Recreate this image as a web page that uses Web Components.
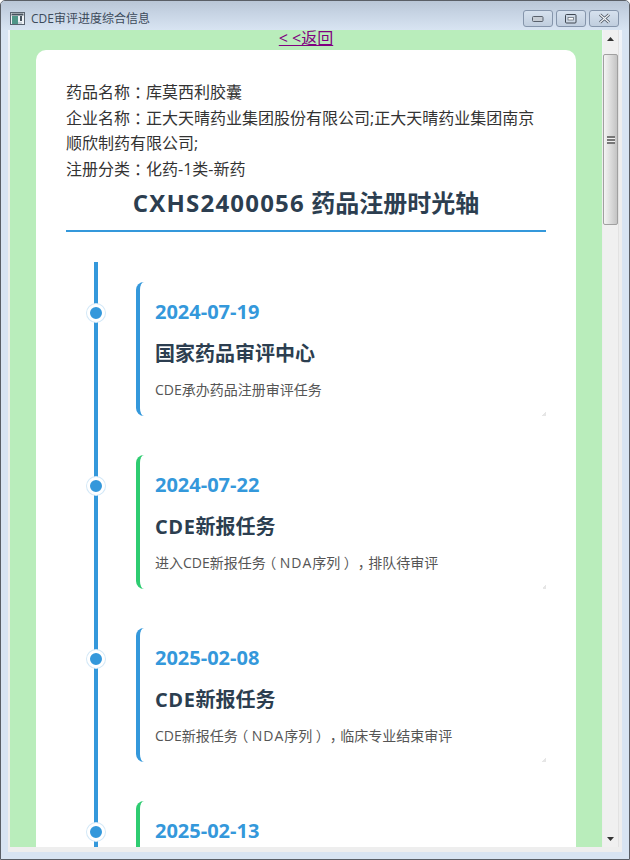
<!DOCTYPE html>
<html lang="zh"><head><meta charset="utf-8"><title>CDE审评进度综合信息</title>
<style>
html,body{margin:0;padding:0;width:630px;height:860px;overflow:hidden}
body{font-family:"Open Sans","Noto Sans CJK SC",sans-serif;text-spacing-trim:space-all}
</style></head><body>
<win-frame caption="CDE审评进度综合信息">
  <a-back slot="top"></a-back>
  <drug-card>
    <info-lines>
      <zh-text text="药品名称：库莫西利胶囊"></zh-text>
      <zh-text text="企业名称：正大天晴药业集团股份有限公司;正大天晴药业集团南京顺欣制药有限公司;"></zh-text>
      <zh-text text="注册分类：化药-1类-新药"></zh-text>
    </info-lines>
    <time-head></time-head>
    <time-line>
      <time-item accent="#3498db" date="2024-07-19" title="国家药品审评中心" desc="CDE承办药品注册审评任务"></time-item>
      <time-item accent="#2ecc71" date="2024-07-22" title="CDE新报任务" desc="进入CDE新报任务（NDA序列），排队待审评"></time-item>
      <time-item accent="#3498db" date="2025-02-08" title="CDE新报任务" desc="CDE新报任务（NDA序列），临床专业结束审评"></time-item>
      <time-item accent="#2ecc71" date="2025-02-13"></time-item>
    </time-line>
  </drug-card>
</win-frame>
<script>
const esc=s=>s.replace(/&/g,'&amp;').replace(/</g,'&lt;');
function rich(text,ls){
  return esc(text).replace(/[：，（）]|[A-Za-z0-9]+/g,m=>{
    if('：，（）'.includes(m))return `<span class="p">${m}</span>`;
    if(m==='NDA')return `<span style="letter-spacing:1px">${m}</span>`;
    return ls?`<span style="letter-spacing:${ls}">${m}</span>`:m;
  });
}
const RICH=`.p{display:inline-block;padding:0 .25em;font-feature-settings:"halt"}`;
function def(name,fn){
  customElements.define(name,class extends HTMLElement{
    constructor(){super();this.attachShadow({mode:'open'})}
    connectedCallback(){this.shadowRoot.innerHTML=fn(n=>this.getAttribute(n)||'')}
  });
}
def('zh-text',a=>`<style>:host{display:block}${RICH}</style>${rich(a('text'),a('ls'))}`);
def('win-frame',a=>`<style>
:host{display:flex;flex-direction:column;box-sizing:border-box;width:630px;height:860px;background:#d8e4f2;border:1px solid #5a5f66;border-radius:5px 5px 0 0;overflow:hidden}
.title{flex:none;box-sizing:border-box;height:29px;padding:6px 10px 0 9px;display:flex;align-items:center;gap:6px;background:linear-gradient(#b9c6d6,#c6d3e3 40%,#d8e4f2);font:12px "Open Sans","Noto Sans CJK SC",sans-serif;color:#3c4a5a}
.cap{flex:1;white-space:nowrap;margin-top:-1px}
.btns{display:flex;gap:3px}
.btn{box-sizing:border-box;width:30px;height:17px;border:1px solid #8595ab;border-radius:3px;background:linear-gradient(#d6e1ee,#c0cede);display:flex;align-items:center;justify-content:center}
.inner{flex:none;margin:0 7px 7px 7px;height:822px;box-sizing:border-box;padding:0 3px 5px 2px;display:flex;gap:1px;background:linear-gradient(#f0f4fa,#eee 8%)}
.view{width:592px;height:817px;background:#b9edbb;overflow:hidden;display:flex;flex-direction:column;align-items:center}
.bar{width:16px;height:817px;background:#f0f0f0;box-sizing:border-box;display:flex;flex-direction:column;align-items:center;border-right:1px solid #e2e2e2}
.arrow{flex:none;height:18px;display:flex;align-items:center;justify-content:center}
.arrow.b{height:16px}
.thumb{flex:none;margin-top:6px;width:15px;height:171px;box-sizing:border-box;border:1px solid #a0a0a0;border-radius:2px;background:linear-gradient(90deg,#f4f4f4,#dcdcdc 50%,#c4c4c4);display:flex;align-items:center;justify-content:center}
.grip{width:8px;height:8px;background:repeating-linear-gradient(#777 0 2px,#f0f0f0 2px 3px)}
.sp{flex:1}
</style>
<div class="title">
  <svg width="15" height="14" viewBox="0 0 15 14"><rect x=".5" y=".5" width="14" height="12" fill="#eef2f6" stroke="#5a6470"/><rect x="1.5" y="1.5" width="12" height="2" fill="#46525e"/><rect x="2" y="4" width="6" height="8" fill="#4f9688"/><rect x="10" y="4" width="2" height="5" fill="#46525e"/><rect x="8" y="10" width="4" height="2" fill="#c9d2da"/></svg>
  <span class="cap">${esc(a('caption'))}</span>
  <div class="btns">
    <div class="btn"><svg width="12" height="7" viewBox="0 0 12 7" style="margin-top:2px"><rect x=".5" y=".5" width="10.5" height="5" rx="1" fill="#c5ccd4" stroke="#59616c"/></svg></div>
    <div class="btn"><svg width="12" height="10" viewBox="0 0 12 10"><rect x=".5" y=".5" width="10.5" height="8.5" rx="1" fill="#ccd7e4" stroke="#3f4751"/><rect x="3" y="3.5" width="5.5" height="2.5" fill="#fff" stroke="#59616c" stroke-width=".7"/></svg></div>
    <div class="btn"><svg width="13" height="11" viewBox="0 0 13 11"><path d="M2 1.5l9 8M11 1.5l-9 8" stroke="#4d5662" stroke-width="3" fill="none"/><path d="M2 1.5l9 8M11 1.5l-9 8" stroke="#f2f5f8" stroke-width="1.2" fill="none"/></svg></div>
  </div>
</div>
<div class="inner">
  <div class="view"><slot name="top"></slot><slot></slot></div>
  <div class="bar">
    <div class="arrow"><svg width="7" height="4" viewBox="0 0 7 4"><path d="M3.5 0L7 4H0z" fill="#333"/></svg></div>
    <div class="thumb"><div class="grip"></div></div>
    <div class="sp"></div>
    <div class="arrow b"><svg width="7" height="4" viewBox="0 0 7 4"><path d="M0 0h7L3.5 4z" fill="#333"/></svg></div>
  </div>
</div>`);
def('a-back',()=>`<style>
:host{display:block;flex:none;height:20px;width:100%;text-align:center;font:16px/16px "Open Sans","Noto Sans CJK SC",sans-serif}
a{color:#800080;text-decoration:underline}
</style><a href="#b">&lt; &lt;返回</a>`);
def('drug-card',()=>`<style>
:host{display:block;flex:none;box-sizing:border-box;width:540px;padding:30px;background:#fff;border-radius:10px;color:#333}
</style><slot></slot>`);
def('info-lines',()=>`<style>
:host{display:block;font-size:16px;line-height:25.6px;color:#333}
</style><slot></slot>`);
def('time-head',()=>`<style>
:host{display:block;box-sizing:border-box;height:50px;text-align:center;font-size:24px;line-height:41px;font-weight:700;color:#2c3e50;border-bottom:2px solid #3498db}
span{letter-spacing:1.2px}
</style><span>CXHS2400056</span> 药品注册时光轴`);
def('time-line',()=>`<style>
:host{display:flex;flex-direction:column;gap:39px;position:relative;margin-top:30px;padding:20px 0 0 70px}
.rail{position:absolute;left:28px;top:0;bottom:0;width:4px;background:#3498db}
</style><div class="rail"></div><slot></slot>`);
def('time-item',a=>`<style>
:host{display:block;position:relative;box-sizing:border-box;height:134px;padding:15px;background:#fff;border-left:4px solid ${a('accent')};border-radius:8px}
.dot{position:absolute;left:-53px;top:22px;width:12px;height:12px;border-radius:50%;background:#3498db;border:3px solid #fff;box-shadow:0 0 0 1px #d3e8f7}
.date{font-size:20px;line-height:30px;font-weight:700;color:#3498db}
.t{font-size:20px;line-height:30px;font-weight:700;color:#2c3e50;margin-top:12px}
.d{font-size:14px;line-height:22px;color:#555;margin-top:10px;white-space:nowrap}
.c{position:absolute;right:0;bottom:0;width:4px;height:4px;background:linear-gradient(135deg,transparent 50%,#e6e6e6 50%)}
${RICH}
</style><div class="dot"></div><div class="date">${a('date')}</div>${a('title')?`<div class="t">${rich(a('title'),'.6px')}</div><div class="d">${rich(a('desc'))}</div>`:''}<div class="c"></div>`);
</script>
</body></html>
